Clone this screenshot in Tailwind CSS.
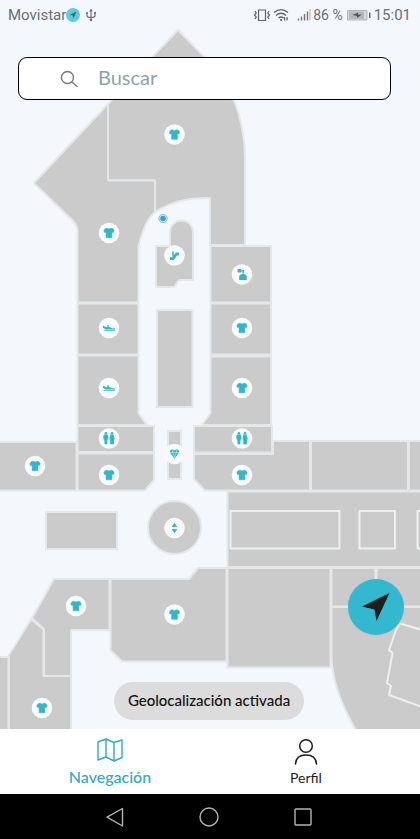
<!DOCTYPE html>
<html lang="es">
<head>
<meta charset="utf-8">
<meta name="viewport" content="width=device-width, initial-scale=1">
<title>Mapa del centro comercial</title>
<script src="https://cdn.jsdelivr.net/npm/@tailwindcss/browser@4"></script>
</head>
<body class="bg-white font-['Lato',sans-serif]">
<div class="flex min-h-screen flex-col">
  <main class="relative flex flex-1 flex-col overflow-hidden bg-[#f4f8fc] pb-[9px]">
    <svg class="absolute inset-0 h-full w-full" viewBox="0 0 420 729" preserveAspectRatio="xMidYMin slice" role="img" aria-label="Plano">
      <defs>
        <g id="pin"><circle r="10.300" fill="#f8fafc" stroke="none"/></g>
        <g id="shirt"><use href="#pin"/><path d="M-2-4.800Q0-3.400 2-4.800L4-4.300 5.200-2.200 4.300-.3 2.900-.9V4.800H-2.900V-.9L-4.300-.3-5.200-2.200-4-4.300Z" fill="#33b5cb" stroke="#33b5cb" stroke-width=".5" stroke-linejoin="round"/></g>
        <g id="shoe"><use href="#pin"/><path d="M-6-2.500L-3-.8-1.700-1.200-1.500-3H-.3V-1H.5L3 .3 6 .5V1.500H-3.500L-6-.3ZM-5.200 2H6V2.800H-5.200Z" fill="#33b5cb"/></g>
        <g id="wc"><use href="#pin"/><path d="M-4.800-4H-1.400L-.6-2.500-.8 1H-1.500L-1.800 5.700H-4.400L-4.700 1H-5.500L-5.700-2.500ZM1.500-4H4.500L5.900 1H5V5.700H1.200V1H.3Z" fill="#33b5cb"/><circle cx="-3.100" cy="-5.200" r="1.300" fill="#33b5cb"/><circle cx="3" cy="-5.200" r="1.300" fill="#33b5cb"/></g>
      </defs>
      <g fill="#cbcbcb" stroke="#e5e7e9" stroke-width="2" stroke-linejoin="round">
        <path d="M178 30L220 73Q245 112 245 160V245H210V198Q178 197 155 212V180.500H108V104Z"/>
        <path d="M108 104V180.500H155V212Q145 220 138.500 246V302.500H77.500V230Q77 225 72 220L34 183Z"/>
        <path d="M77.500 303.500H138.500V354.500H77.500ZM77.500 355.500H138.500V413L147 425H77.500ZM77.500 426H154V452H77.500ZM77.500 453.500H154V480L145 490.500H77.500ZM-2 442H76.500V490.500H-2Z"/>
        <path d="M210.500 246H271V302.500H210.500ZM210.500 303.500H271V354.500H210.500ZM210.500 356.500H271V425H202L210.500 413ZM194 426H272V452.500H194Z"/>
        <path d="M194 454H273V441H310V490.500H205L194 479ZM311 441H408V490.500H311ZM409 441H422V490.500H409Z"/>
        <path d="M227.500 491.500H422V567H227.500Z"/>
        <path d="M156 246H170V232A11.500 11.500 0 0 1 193 232V280H179L174 287H156ZM157 310H192.500V407H157ZM168 431H181V479H168ZM46 512H117V549H46Z"/>
        <circle cx="174.500" cy="527.500" r="26.500"/>
        <path d="M54 579H109.500V630H71V676H44V629L32 618ZM31 619.500L43.500 629.500V676H71V732H9V655ZM-2 657H8.500V732H-2Z"/>
        <path d="M110.500 579H189L198 568H226.500V661.500H122L110.500 650ZM227.500 568H330.500V667.500H227.500Z"/>
        <path d="M331.500 568H375.500V606.500H331.500ZM376.500 568H422V606.500H376.500ZM331.500 607H422V732H357Q332 690 331.500 655Z"/>
        <g fill="none" stroke="#edeff0">
          <path d="M230.500 511H339.500V548.500H230.500ZM359.500 511H395V548.500H359.500ZM422 511H417.500V548.500H422"/>
          <path d="M422 630L400 623.500 396 630 389 650 392.500 653 387 683 391 686 389 695 422 707"/>
        </g>
      </g>
      <use href="#shirt" x="174.500" y="134.500"/><use href="#shirt" x="109" y="233"/><use href="#shirt" x="242" y="328"/><use href="#shirt" x="242" y="388"/>
      <use href="#shirt" x="109" y="475"/><use href="#shirt" x="242" y="475"/><use href="#shirt" x="35" y="466"/><use href="#shirt" x="76" y="606"/>
      <use href="#shirt" x="174.500" y="614.500"/><use href="#shirt" x="42" y="708"/>
      <use href="#shoe" x="109" y="328"/><use href="#shoe" x="109" y="388"/>
      <use href="#wc" x="109" y="438.500"/><use href="#wc" x="242" y="438.500"/>
      <g transform="translate(242 274.500)" fill="#33b5cb"><use href="#pin"/><rect x="-4.500" y="-5.500" width="4" height="3.500" rx="1"/><path d="M-.5-4.500H2V-1H.4V-3.300H-.5ZM-2.800 5.500V2Q-2.500-.5 1-.5T4.800 2V5.500Z"/></g>
      <g transform="translate(174.500 255.500)" fill="none" stroke="#33b5cb"><use href="#pin"/><path d="M-4.500 3.200H-1.500L2-1.500H4.500" stroke-width="2.800"/><path d="M-1.500-4V1" stroke-width="1.500"/></g>
      <g transform="translate(174.500 454)"><use href="#pin"/><path d="M-3-4.500Q-1-5 0-3.500 1-5 3-4.500 5-4 4.600-1.500L0 4.800-4.600-1.500Q-5-4 -3-4.500Z" fill="#33b5cb"/><path d="M-4.500-1.500H4.500M-2.300-4L-1.800-1.500 0 3.500 1.800-1.500 2.300-4" fill="none" stroke="#f5f8fc" stroke-width=".5"/></g>
      <g transform="translate(174.500 528)" fill="#33b5cb"><use href="#pin"/><path d="M0-5.200L2.800-1H-2.800ZM0 5.200L2.800 1H-2.800Z"/></g>
      <circle cx="163" cy="218.500" r="4.200" fill="#d5e9f7" stroke="#6bb5e0" stroke-width=".8"/><circle cx="163" cy="218.500" r="2.800" fill="#3b9fd6"/>
    </svg>

    <header class="relative flex h-[30px] items-center justify-between pr-[9px] pl-2 font-['Roboto',sans-serif] text-[15px] text-[#6b6e71]">
      <div class="flex items-center">
        <span>Movistar</span>
        <svg class="h-[14px] w-[14px]" viewBox="0 0 14 14"><circle cx="7" cy="7" r="7" fill="#5fcbdc"/><path d="M10.500 3.500L7.500 10.500 6.800 7.500 3.500 7Z" fill="#3f6970"/></svg>
        <svg class="ml-1 h-[14px] w-[14px]" viewBox="0 0 14 14" fill="none" stroke="#707376" stroke-width="1.200"><path d="M7 12V2M3 5V7.500Q3 9.500 7 9.500T11 7.500V5"/><path d="M7 .5L8.800 3.500H5.200Z" fill="#707376" stroke="none"/><circle cx="7" cy="12" r="1.300" fill="#707376" stroke="none"/><circle cx="3" cy="5" r="1.100" fill="#707376" stroke="none"/><path d="M10 4H12V6H10Z" fill="#707376" stroke="none"/></svg>
      </div>
      <div class="flex items-center">
        <svg class="h-4 w-[18px]" viewBox="0 0 18 16" fill="none" stroke="#606366" stroke-width="1.200"><path d="M5.500 3H12.500V13.500H5.500ZM2 4L3.200 6 1.500 8 3.200 10 2 12M16 4L14.800 6 16.500 8 14.800 10 16 12"/></svg>
        <svg class="ml-[2px] h-4 w-4" viewBox="0 0 16 16" fill="none" stroke="#606366" stroke-width="1.300"><path d="M1 5.500Q8-.2 15 5.500M3 8.500Q8 4 13 8.500M5.500 11Q8 9 10.500 11M11.500 10V13.500M14 10V13.500"/><circle cx="8" cy="13" r="1.100" fill="#606366" stroke="none"/></svg>
        <svg class="ml-2 h-4 w-[14px]" viewBox="0 0 14 16" fill="none" stroke="#707376" stroke-width="1.400"><path d="M1.500 13.500V11.500M4.500 13.500V9.500M7.500 13.500V7M10.500 13.500V4.500"/><path d="M13 13.500V2" stroke="#c2c5c8"/></svg>
        <span class="ml-[2px] text-sm">86 %</span>
        <svg class="ml-1 h-4 w-[25px]" viewBox="0 0 25 16"><path d="M.5 3.500H20V13H.5Z" fill="#d5d8db" stroke="#b1b4b7"/><path d="M2 4.500H17V12H2Z" fill="#b5b8bb"/><path d="M5.500 8L11 5.500V7.500H15L10 11V9Z" fill="#55585b"/><path d="M22 5.500H23.500V11H22Z" fill="#606366"/></svg>
        <time class="ml-[2px]">15:01</time>
      </div>
    </header>

    <form class="relative mt-[27px] mr-[29px] ml-[18px] flex h-[43px] items-center rounded-[9px] border border-black bg-white" role="search">
      <label for="buscar" aria-label="Buscar" class="ml-[41px] flex w-[38px] shrink-0">
        <svg class="h-[18px] w-[18px]" viewBox="0 0 18 18" fill="none" stroke="#777" stroke-width="1.400" stroke-linecap="round"><circle cx="7.500" cy="7.500" r="6"/><path d="M12 12L17 16.500"/></svg>
      </label>
      <input id="buscar" type="text" placeholder="Buscar" class="min-w-0 flex-1 bg-transparent pb-1 text-xl text-gray-800 outline-none placeholder:text-[#8fa3a8]">
    </form>

    <button type="button" aria-label="Centrar en mi posición" class="relative mt-auto mr-4 mb-[47px] flex h-14 w-14 items-center justify-center self-end rounded-full bg-[#33b8d0] shadow-xs">
      <svg class="h-7 w-7" viewBox="0 0 28 28"><path d="M27.500 0L14.500 28 12.500 16.500 0 13.500Z" fill="#1e1e1e"/></svg>
    </button>
    <div class="relative flex justify-center pr-[2px]">
      <p class="flex h-[38px] items-center rounded-full bg-[#dcdcdc] px-[14px] pb-[2px] text-[15px] font-medium text-[#111]" role="status">Geolocalización activada</p>
    </div>
  </main>

  <nav class="grid h-[65px] grid-cols-2 bg-white pr-4 pl-3">
    <a href="#navegacion" aria-current="page" class="flex flex-col items-center pt-2 text-[#31a9c0]">
      <svg class="h-[26px] w-[26px]" viewBox="0 0 26 26" fill="none" stroke="currentColor" stroke-width="1.400" stroke-linejoin="round"><path d="M1 5L9 2 17 5.500 25 3V20.500L17 24 9 20 1 23ZM9 2V20M17 5.500V24"/></svg>
      <span class="mt-1 text-base leading-5 font-medium">Navegación</span>
    </a>
    <a href="#perfil" class="flex flex-col items-center pt-2 text-[#1c1c1c]">
      <svg class="h-[29px] w-[26px]" viewBox="0 0 26 29" fill="none" stroke="currentColor" stroke-width="1.500" stroke-linecap="round"><circle cx="13" cy="9" r="6.300"/><path d="M2.500 27Q3 18 13 18T23.500 27"/></svg>
      <span class="mt-[2px] text-sm leading-5">Perfil</span>
    </a>
  </nav>

  <footer class="flex h-[45px] items-center justify-center gap-[74px] bg-black pr-[3px] text-[#b4b4b4]">
    <button type="button" aria-label="Atrás"><svg class="h-5 w-5" viewBox="0 0 20 20" fill="none" stroke="currentColor" stroke-width="1.400" stroke-linejoin="round"><path d="M17.500 1.500V19L2 10.200Z"/></svg></button>
    <button type="button" aria-label="Inicio"><svg class="h-5 w-5" viewBox="0 0 20 20" fill="none" stroke="currentColor" stroke-width="1.400"><circle cx="10" cy="10" r="9"/></svg></button>
    <button type="button" aria-label="Recientes"><svg class="h-5 w-5" viewBox="0 0 20 20" fill="none" stroke="currentColor" stroke-width="1.400"><rect x="2" y="2" width="16" height="16" rx="1"/></svg></button>
  </footer>
</div>
</body>
</html>
